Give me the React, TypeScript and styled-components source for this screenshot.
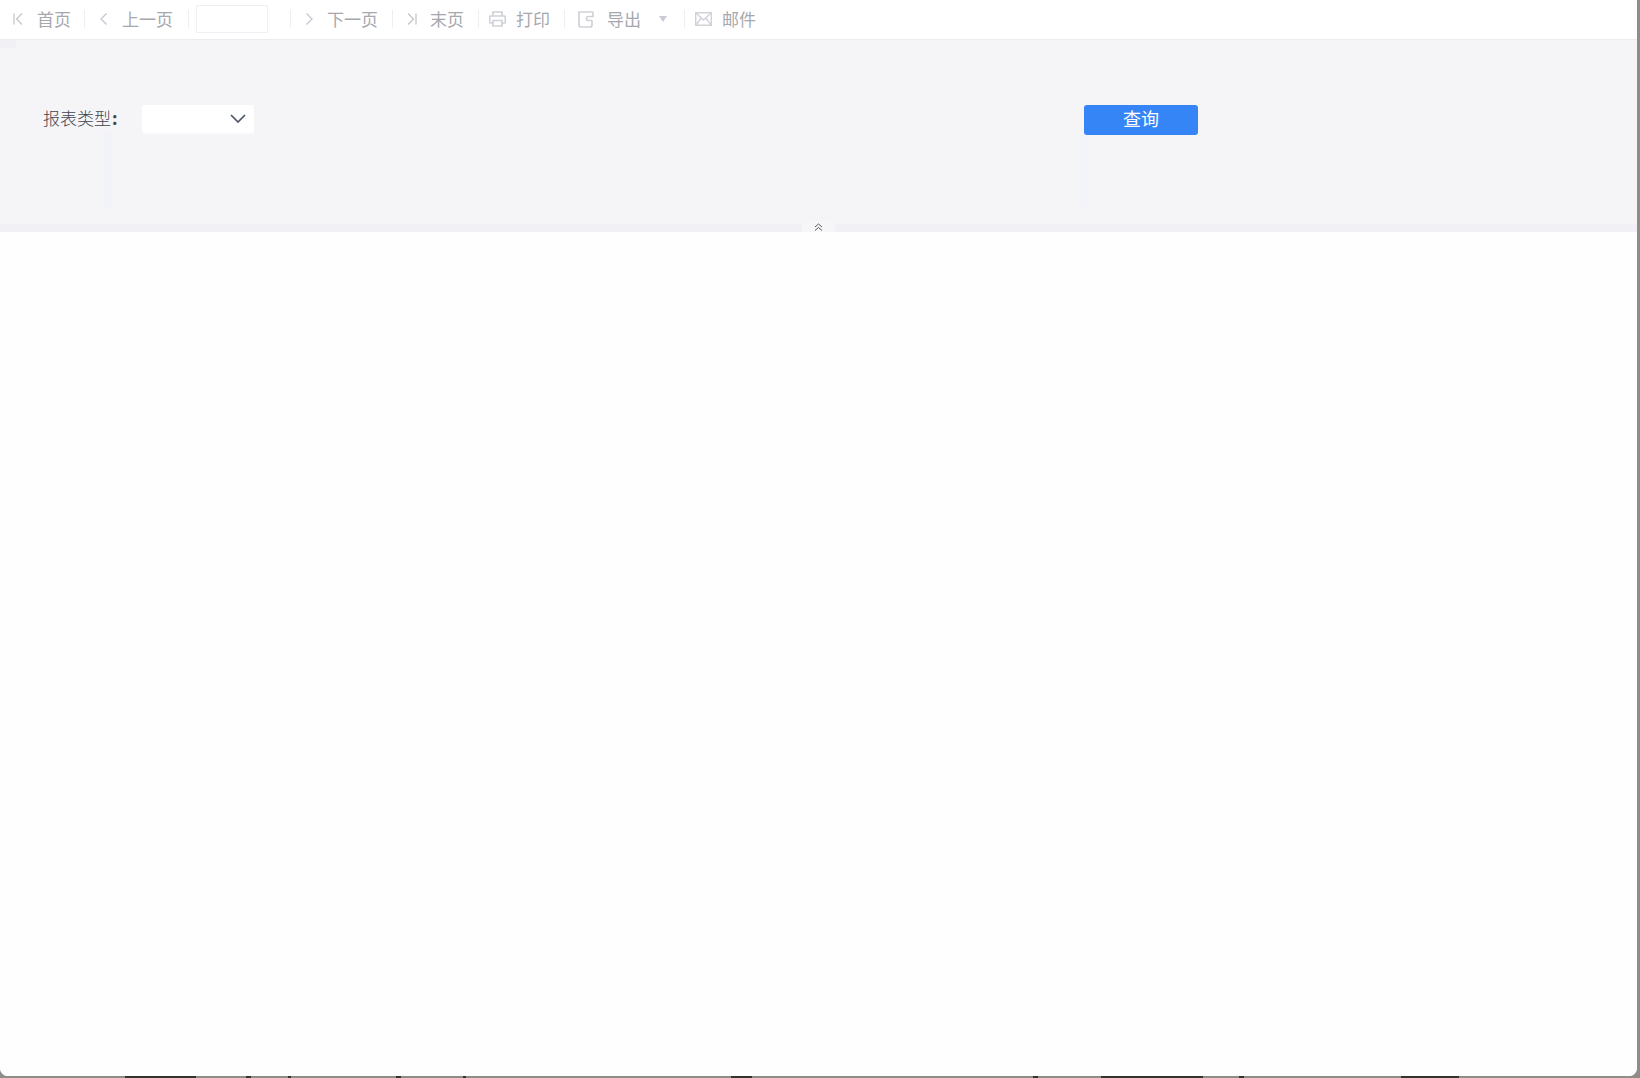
import React from "react";
import styled, {createGlobalStyle} from "styled-components";

const GlobalStyle = createGlobalStyle`
  html, body {
    margin: 0;
    padding: 0;
    height: 100%;
    background: #8f8d88;
    overflow: hidden;
  }

  #root {
    height: 100%;
  }
`

const taskbarBits = [
    {gap: 125, width: 71},
    {gap: 50, width: 5},
    {gap: 37, width: 3},
    {gap: 105, width: 5},
    {gap: 62, width: 3},
    {gap: 265, width: 21},
    {gap: 281, width: 5},
    {gap: 63, width: 102},
    {gap: 36, width: 5},
    {gap: 157, width: 58},
]

const FirstIcon = () => (
    <svg width="10" height="12" viewBox="0 0 10 12" fill="none" stroke="#c4c7ce" strokeWidth="1.3">
        <path d="M1 0.5V11.5M9 0.5L3.5 6L9 11.5"/>
    </svg>
)

const PrevIcon = () => (
    <svg width="7" height="12" viewBox="0 0 7 12" fill="none" stroke="#c4c7ce" strokeWidth="1.3">
        <path d="M6.5 0.5L1 6L6.5 11.5"/>
    </svg>
)

const NextIcon = () => (
    <svg width="7" height="12" viewBox="0 0 7 12" fill="none" stroke="#c4c7ce" strokeWidth="1.3">
        <path d="M0.5 0.5L6 6L0.5 11.5"/>
    </svg>
)

const LastIcon = () => (
    <svg width="10" height="12" viewBox="0 0 10 12" fill="none" stroke="#c4c7ce" strokeWidth="1.3">
        <path d="M1 0.5L6.5 6L1 11.5M9 0.5V11.5"/>
    </svg>
)

const PrintIcon = () => (
    <svg width="17" height="16" viewBox="0 0 17 16" fill="none" stroke="#cfd2d8" strokeWidth="1.7">
        <path d="M4 5V1H13V5"/>
        <path d="M4 12H1.5C1 12 0.7 11.7 0.7 11.2V6C0.7 5.4 1.1 5 1.7 5H15.3C15.9 5 16.3 5.4 16.3 6V11.2C16.3 11.7 16 12 15.5 12H13"/>
        <path d="M4 9.5H13V15H4Z"/>
    </svg>
)

const ExportIcon = () => (
    <svg width="16" height="17" viewBox="0 0 16 17" fill="none" stroke="#cfd2d8" strokeWidth="1.7">
        <path d="M15 1H1V14C1 15.2 1.8 16 3 16H12C13.2 16 14 15.2 14 14V9.5"/>
        <path d="M15 1V5.5H10.5C9.4 5.5 8.5 6.4 8.5 7.5C8.5 8.6 9.4 9.5 10.5 9.5H14"/>
    </svg>
)

const MailIcon = () => (
    <svg width="17" height="14" viewBox="0 0 17 14" fill="none" stroke="#cfd2d8" strokeWidth="1.4">
        <path d="M0.7 0.7H16.3V13.3H0.7Z"/>
        <path d="M0.7 0.7L8.5 8L16.3 0.7M0.7 13.3L6.2 6M16.3 13.3L10.8 6"/>
    </svg>
)

export default function App() {
    return (
        <>
            <GlobalStyle/>
            <Screen>
                <Window>
                    <Toolbar>
                        <ToolItem $gap={14}><FirstIcon/><ToolLabel>首页</ToolLabel></ToolItem>
                        <Separator $before={13} $after={15}/>
                        <ToolItem $gap={15}><PrevIcon/><ToolLabel>上一页</ToolLabel></ToolItem>
                        <Separator $before={15} $after={7}/>
                        <PageInput/>
                        <Separator $before={22} $after={15}/>
                        <ToolItem $gap={14}><NextIcon/><ToolLabel>下一页</ToolLabel></ToolItem>
                        <Separator $before={14} $after={14}/>
                        <ToolItem $gap={13}><LastIcon/><ToolLabel>末页</ToolLabel></ToolItem>
                        <Separator $before={14} $after={10}/>
                        <ToolItem $gap={10}><PrintIcon/><ToolLabel>打印</ToolLabel></ToolItem>
                        <Separator $before={14} $after={13}/>
                        <ToolItem $gap={13}><ExportIcon/><ToolLabel>导出</ToolLabel></ToolItem>
                        <ExportCaret/>
                        <Separator $before={17} $after={10}/>
                        <ToolItem $gap={10}><MailIcon/><ToolLabel>邮件</ToolLabel></ToolItem>
                    </Toolbar>

                    <FilterPanel>
                        <CornerGhost/>
                        <LabelGhost/>
                        <ButtonGhost/>
                        <FieldLabel>报表类型<FieldColon>:</FieldColon></FieldLabel>
                        <TypeSelect>
                            <svg width="16" height="9" viewBox="0 0 16 9" fill="none" stroke="#4b5563" strokeWidth="1.7">
                                <path d="M1 1L8 8L15 1"/>
                            </svg>
                        </TypeSelect>
                        <QueryButton>查询</QueryButton>
                    </FilterPanel>

                    <CollapseBar>
                        <CollapseHandle>
                            <svg width="9" height="8" viewBox="0 0 9 8" fill="none" stroke="#555b66" strokeWidth="1">
                                <path d="M1 4L4.5 1L8 4M1 7.5L4.5 4.5L8 7.5"/>
                            </svg>
                        </CollapseHandle>
                    </CollapseBar>

                    <Content/>
                </Window>

                <Taskbar>
                    {taskbarBits.map((bit, index) => (
                        <TaskbarBit key={index} style={{marginLeft: bit.gap, width: bit.width}}/>
                    ))}
                </Taskbar>
            </Screen>
        </>
    )
}

const Screen = styled.div`
  height: 1078px;
  width: 1640px;
  display: flex;
  flex-direction: column;
`

const Window = styled.div`
  width: 1637px;
  height: 1076px;
  display: flex;
  flex-direction: column;
  background: #fefefe;
  border-radius: 0 0 8px 8px;
  overflow: hidden;
`

const Toolbar = styled.div`
  height: 40px;
  flex-shrink: 0;
  box-sizing: border-box;
  padding: 0 0 1px 13px;
  display: flex;
  align-items: center;
  background: #ffffff;
  border-bottom: 1px solid #ebecf0;
`

const ToolItem = styled.div<{ $gap: number }>`
  display: flex;
  align-items: center;
  gap: ${(props) => props.$gap}px;
`

const ToolLabel = styled.span`
  font-family: "Noto Sans CJK SC", "Liberation Sans", sans-serif;
  font-size: 17px;
  line-height: 20px;
  color: #a6a8ae;
`

const Separator = styled.span<{ $before: number, $after: number }>`
  width: 1px;
  height: 18px;
  flex-shrink: 0;
  margin-left: ${(props) => props.$before}px;
  margin-right: ${(props) => props.$after}px;
  background: #eceef1;
`

const PageInput = styled.input`
  width: 72px;
  height: 28px;
  box-sizing: border-box;
  padding: 0;
  background: #ffffff;
  border: 1px solid #eef0f4;
  outline: none;
`

const ExportCaret = styled.span`
  width: 0;
  height: 0;
  margin-left: 18px;
  border-left: 4.5px solid transparent;
  border-right: 4.5px solid transparent;
  border-top: 6px solid #c9ccd2;
`

const FilterPanel = styled.div`
  height: 184px;
  flex-shrink: 0;
  box-sizing: border-box;
  padding: 65px 0 0 43px;
  display: flex;
  align-items: flex-start;
  position: relative;
  background: #f5f5f7;
`

// faint smears the reference carries over the panel
const CornerGhost = styled.span`
  position: absolute;
  left: 0;
  top: 0;
  width: 16px;
  height: 8px;
  background: #f0f0f5;
`

const LabelGhost = styled.span`
  position: absolute;
  left: 104px;
  top: 92px;
  width: 8px;
  height: 76px;
  background: #f2f3f9;
`

const ButtonGhost = styled.span`
  position: absolute;
  left: 1080px;
  top: 95px;
  width: 8px;
  height: 72px;
  background: #f3f4fa;
`

const FieldLabel = styled.label`
  width: 99px;
  height: 30px;
  font-family: "Noto Sans CJK SC", "Liberation Serif", serif;
  font-size: 17px;
  font-weight: 300;
  line-height: 26px;
  color: #3f4450;
`

const FieldColon = styled.b`
  margin-left: 1px;
  font-weight: 700;
`

const TypeSelect = styled.div`
  width: 112px;
  height: 27px;
  margin-top: 0;
  padding-right: 8px;
  box-sizing: border-box;
  display: flex;
  align-items: center;
  justify-content: flex-end;
  background: #ffffff;
  border-radius: 2px;
  box-shadow: 0 2px 0 #fbfbfd;
`

const QueryButton = styled.button`
  width: 114px;
  height: 30px;
  margin-left: 830px;
  padding: 0 0 3px;
  font-family: "Noto Sans CJK SC", "Liberation Sans", sans-serif;
  font-size: 18px;
  line-height: 27px;
  color: #ffffff;
  background: #3585f6;
  border: none;
  border-radius: 3px;
`

const CollapseBar = styled.div`
  height: 8px;
  flex-shrink: 0;
  position: relative;
  background: #f1f1f5;
`

const CollapseHandle = styled.div`
  position: absolute;
  left: 802px;
  top: -3px;
  width: 33px;
  height: 11px;
  display: flex;
  align-items: center;
  justify-content: center;
  background: #f6f6f8;
`

const Content = styled.div`
  flex: 1;
  background: #fefefe;
`

const Taskbar = styled.div`
  height: 2px;
  display: flex;
`

const TaskbarBit = styled.span`
  height: 2px;
  flex-shrink: 0;
  background: #33322f;
`
